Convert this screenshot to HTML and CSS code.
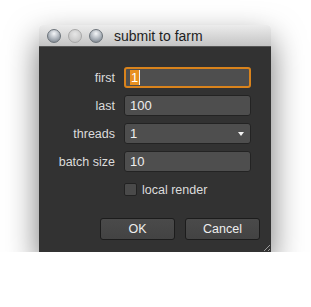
FILE: index.html
```html
<!DOCTYPE html>
<html lang="en">
<head>
    <meta charset="UTF-8">
    <title>submit to farm</title>
    <link rel="stylesheet" href="styles.css">
</head>
<body>
    <div id="window">
        <div class="titleBar">
            <div class="lights">
                <span class="light"></span>
                <span class="light off"></span>
                <span class="light"></span>
            </div>
            <h4 class="title">submit to farm</h4>
        </div>

        <div class="content">
            <form id="farmForm">
                <label>first</label>
                <div class="field focused"><span class="selected">1</span><span class="caret"></span></div>

                <label>last</label>
                <div class="field">100</div>

                <label>threads</label>
                <div class="field combo">1<span class="arrow"></span></div>

                <label>batch size</label>
                <div class="field">10</div>

                <span></span>
                <div class="check"><span class="box"></span>local render</div>
            </form>

            <div class="buttons">
                <div class="button">OK</div>
                <div class="button">Cancel</div>
            </div>
            <div class="grip"></div>
        </div>
    </div>
</body>
</html>
```

FILE: styles.css
```css
/* Reset default margin and padding on all elements */
* {
    margin: 0;
    padding: 0;
    box-sizing: border-box;
}

body {
    font-family: "Liberation Sans", Arial, sans-serif;
    background-color: #ffffff;
    padding: 25px 0 0 39px;
}

/* The dialog window */
#window {
    width: 232px;
    border-radius: 4px 4px 0 0;
    box-shadow: 0 14px 32px rgba(0, 0, 0, 0.55);
}

.titleBar {
    height: 22px;
    display: flex;
    align-items: center;
    border-radius: 4px 4px 0 0;
    background: linear-gradient(#ececec, #c4c4c4);
    border-bottom: 1px solid #555;
}

.lights {
    display: flex;
    gap: 7px;
    padding-left: 8px;
}

.light {
    width: 14px;
    height: 14px;
    border-radius: 50%;
    background: radial-gradient(circle at 50% 30%, #f4f6f8 0%, #a9b0b8 55%, #6f7780 100%);
    border: 1px solid #6c737a;
}

.light.off {
    background: radial-gradient(circle at 50% 35%, #e6e6e6, #bcbcbc);
    border-color: #a8a8a8;
}

.title {
    font-weight: normal;
    font-size: 14px;
    color: #1e1e1e;
    margin-left: 11px;
}

/* Dark body of the dialog */
.content {
    background-color: #323232;
    height: 205px;
    padding-top: 20px;
    display: flex;
    flex-direction: column;
    position: relative;
}

#farmForm {
    display: grid;
    grid-template-columns: 76px 127px;
    grid-auto-rows: 21px;
    column-gap: 9px;
    row-gap: 7px;
    align-items: center;
}

label {
    text-align: right;
    font-size: 12.5px;
    color: #dcdcdc;
}

.field {
    height: 21px;
    display: flex;
    align-items: center;
    padding-left: 5px;
    background-color: #4e4e4e;
    border: 1px solid #232323;
    border-radius: 3px;
    font-size: 13px;
    color: #eeeeee;
}

.field.focused {
    border: 2px solid #d9831c;
    padding-left: 4px;
}

.selected {
    background-color: #e8901f;
    color: #ffffff;
    line-height: 15px;
    padding: 0 1px;
}

.caret {
    width: 1px;
    height: 15px;
    background-color: #f0f0f0;
}

.combo {
    position: relative;
}

.arrow {
    position: absolute;
    right: 6px;
    top: 8px;
    border-left: 3px solid transparent;
    border-right: 3px solid transparent;
    border-top: 4px solid #f2f2f2;
}

.check {
    display: flex;
    align-items: center;
    gap: 5px;
    font-size: 12.5px;
    color: #dcdcdc;
}

.box {
    width: 13px;
    height: 13px;
    background-color: #4a4a4a;
    border: 1px solid #222;
    border-radius: 2px;
}

/* OK / Cancel */
.buttons {
    display: flex;
    justify-content: flex-end;
    gap: 10px;
    margin-top: 18px;
    padding-right: 11px;
}

.button {
    width: 75px;
    height: 22px;
    display: flex;
    align-items: center;
    justify-content: center;
    background: linear-gradient(#4a4a4a, #434343);
    border: 1px solid #1c1c1c;
    border-radius: 3px;
    font-size: 12.5px;
    color: #eeeeee;
}

/* Resize grip in the corner */
.grip {
    position: absolute;
    right: 1px;
    bottom: 1px;
    width: 9px;
    height: 9px;
    background: repeating-linear-gradient(135deg, transparent 0 2px, #9a9a9a 2px 3px);
    clip-path: polygon(100% 0, 100% 100%, 0 100%);
}
```
